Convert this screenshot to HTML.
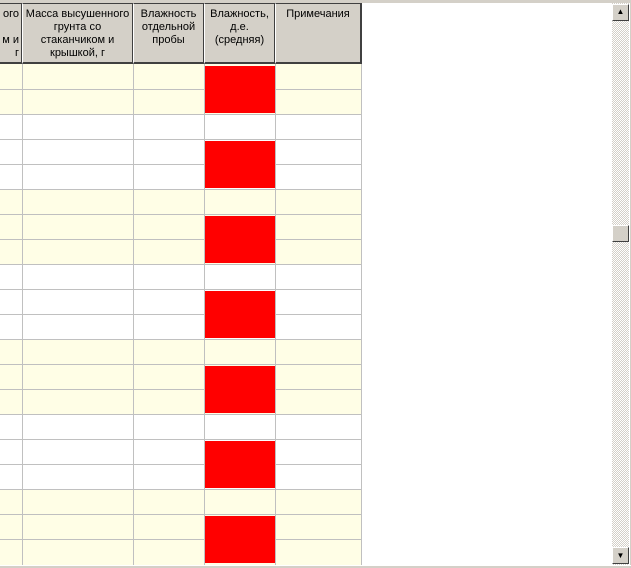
<!DOCTYPE html>
<html><head><meta charset="utf-8"><style>
*{margin:0;padding:0;box-sizing:border-box}
body{width:631px;height:568px;overflow:hidden;background:#fff;position:relative;font-family:Tahoma,"Liberation Sans",sans-serif;font-size:11px;color:#000}
div{position:absolute}
.h{top:3px;height:61px;background:#d4d0c8;border-top:1px solid #404040;border-bottom:2px solid #404040;border-right:2px solid #404040;border-left:1px solid #fff;text-align:center;line-height:13px;padding-top:4px;white-space:nowrap;overflow:hidden}
.y{background:#fffee6}
.v{width:1px;top:64px;height:501px;background:#c0c0c0}
.r{left:0;width:361px;height:1px;background:#c0c0c0}
.red{left:205px;width:70px;height:47px;background:#f00}
</style></head><body>
<div class="y" style="left:0;top:64px;width:361px;height:50px"></div>
<div class="y" style="left:0;top:189px;width:361px;height:75px"></div>
<div class="y" style="left:0;top:339px;width:361px;height:75px"></div>
<div class="y" style="left:0;top:489px;width:361px;height:76px"></div>
<div class="r" style="top:89px"></div><div class="r" style="top:114px"></div><div class="r" style="top:139px"></div><div class="r" style="top:164px"></div><div class="r" style="top:189px"></div><div class="r" style="top:214px"></div><div class="r" style="top:239px"></div><div class="r" style="top:264px"></div><div class="r" style="top:289px"></div><div class="r" style="top:314px"></div><div class="r" style="top:339px"></div><div class="r" style="top:364px"></div><div class="r" style="top:389px"></div><div class="r" style="top:414px"></div><div class="r" style="top:439px"></div><div class="r" style="top:464px"></div><div class="r" style="top:489px"></div><div class="r" style="top:514px"></div><div class="r" style="top:539px"></div>
<div class="v" style="left:22px"></div><div class="v" style="left:133px"></div><div class="v" style="left:204px"></div><div class="v" style="left:275px"></div><div class="v" style="left:361px"></div>
<div class="red" style="top:66px"></div><div class="red" style="top:141px"></div><div class="red" style="top:216px"></div><div class="red" style="top:291px"></div><div class="red" style="top:366px"></div><div class="red" style="top:441px"></div><div class="red" style="top:516px"></div>
<div class="h" style="left:-2px;width:25px;text-align:right;padding-right:2px">ого<br><br>м и<br>г</div>
<div class="h" style="left:22px;width:112px">Масса высушенного<br>грунта со<br>стаканчиком и<br>крышкой, г</div>
<div class="h" style="left:133px;width:72px">Влажность<br>отдельной<br>пробы</div>
<div class="h" style="left:204px;width:72px">Влажность,<br>д.е.<br>(средняя)</div>
<div class="h" style="left:275px;width:87px">Примечания</div>
<div style="left:612px;top:3px;width:17px;height:562px;background:repeating-conic-gradient(#fff 0 25%,#d4d0c8 0 50%) 0 0/2px 2px"></div>
<div style="left:612px;top:4px;width:17px;height:17px;background:#d4d0c8;border:1px solid;border-color:#fff #404040 #404040 #fff;font-size:8px;text-align:center;line-height:14px">▲</div>
<div style="left:612px;top:225px;width:17px;height:17px;background:#d4d0c8;border:1px solid;border-color:#fff #404040 #404040 #fff"></div>
<div style="left:612px;top:547px;width:17px;height:17px;background:#d4d0c8;border:1px solid;border-color:#fff #404040 #404040 #fff;font-size:8px;text-align:center;line-height:15px">▼</div>
<div style="left:629px;top:0;width:2px;height:568px;background:#d4d0c8;border-left:1px solid #fff"></div>
<div style="left:0;top:565px;width:631px;height:3px;background:#d4d0c8;border-top:1px solid #fff"></div>
<div style="left:0;top:0;width:631px;height:3px;background:#d4d0c8"></div>
</body></html>
